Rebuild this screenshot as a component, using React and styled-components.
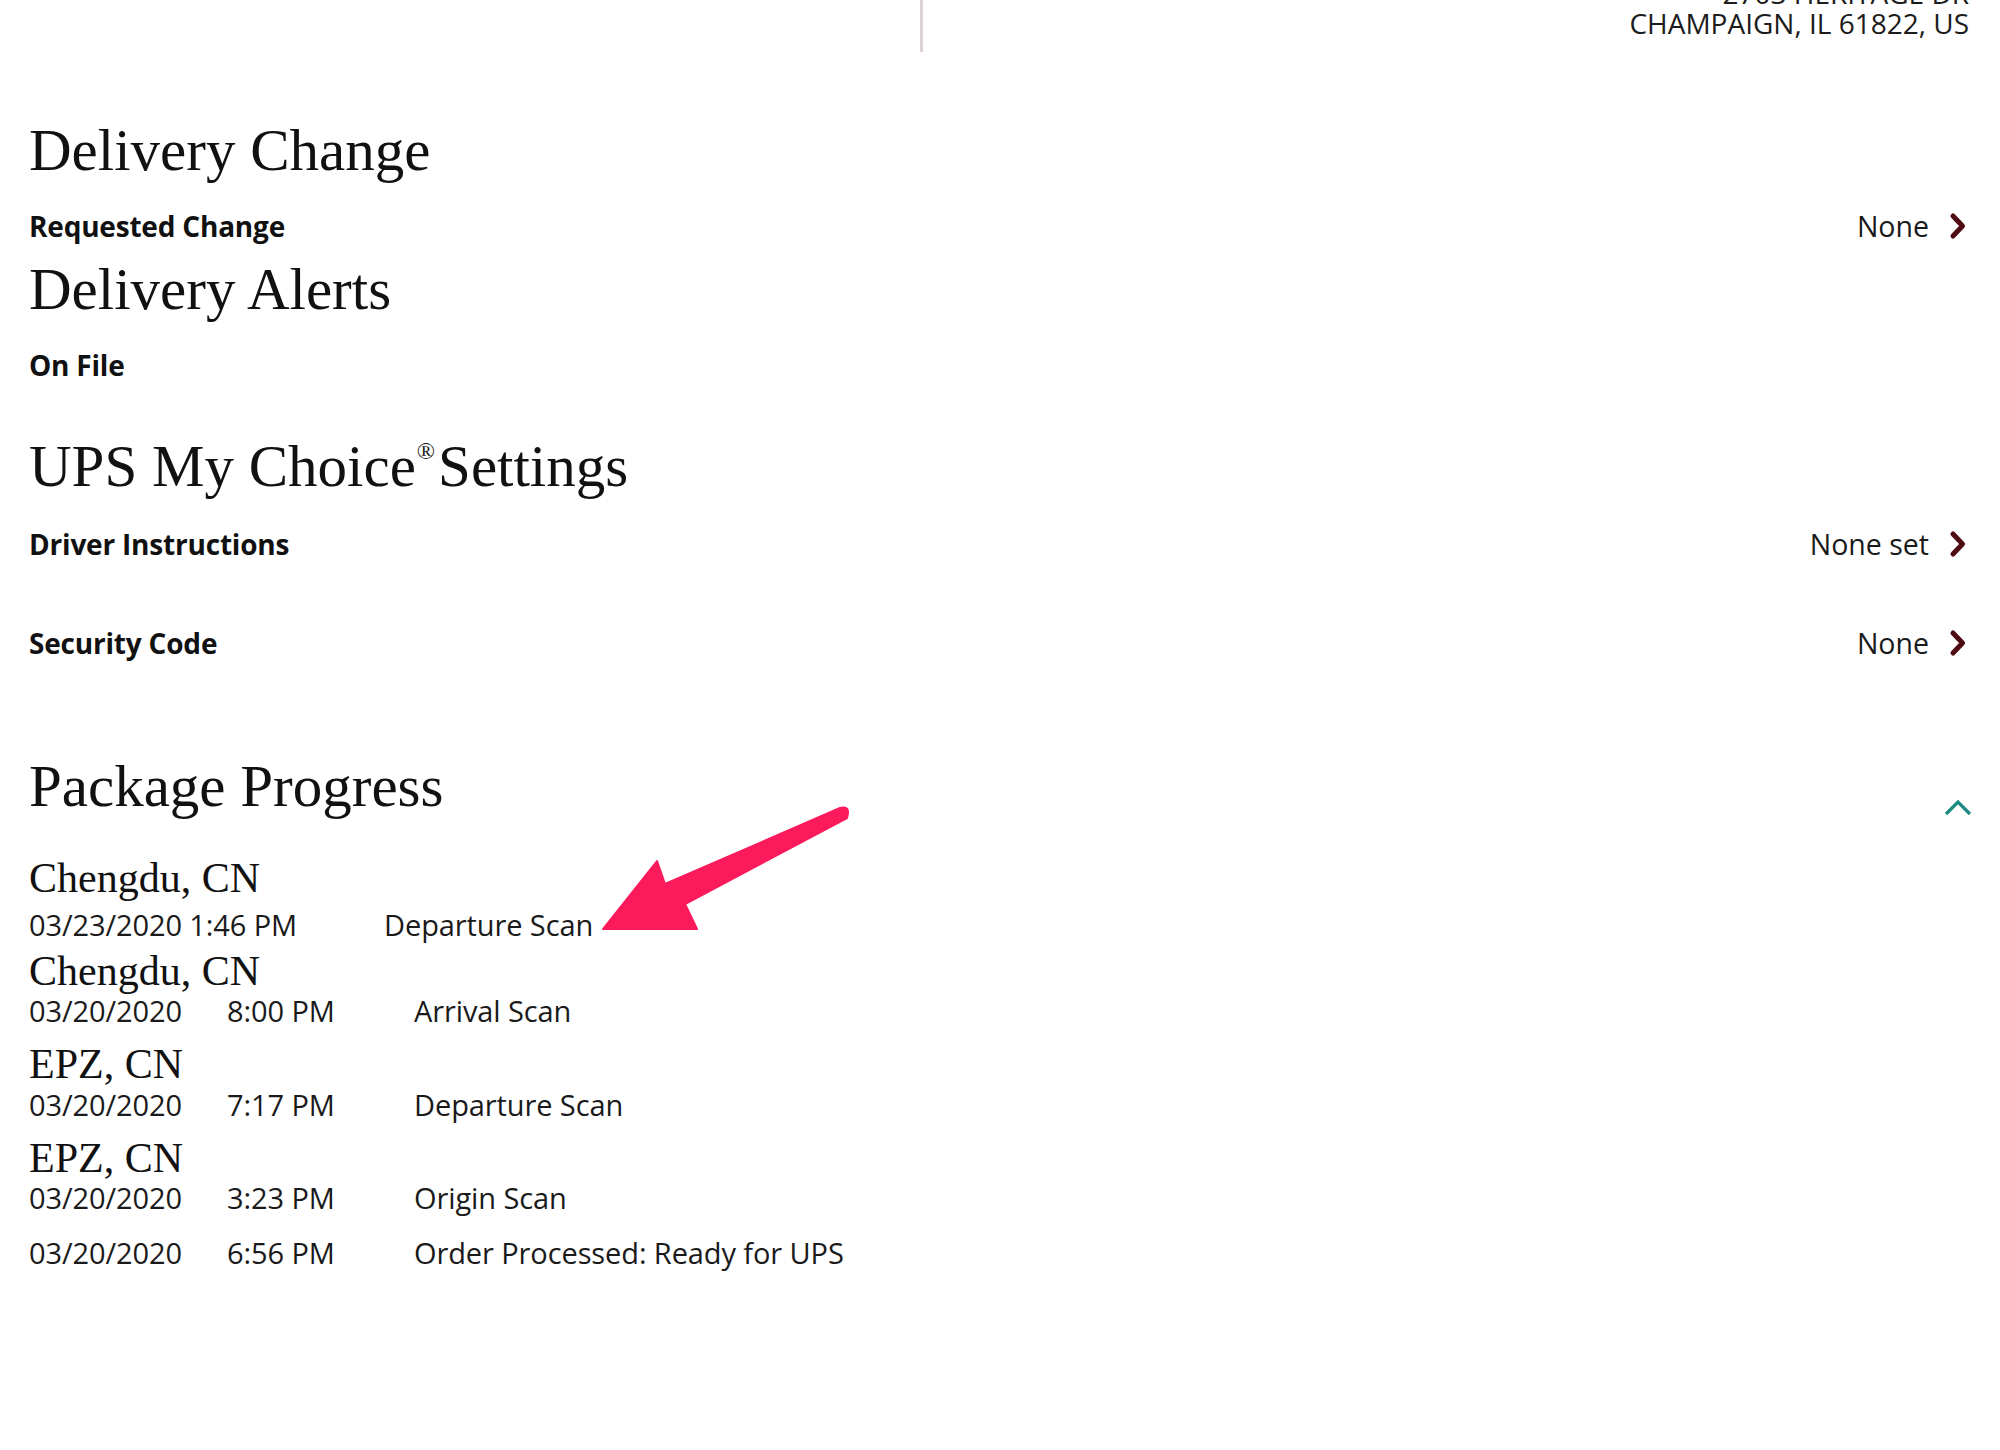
import React from 'react';
import styled, { createGlobalStyle } from 'styled-components';

const GlobalStyle = createGlobalStyle`
  * {
    box-sizing: border-box;
  }

  body {
    margin: 0;
    background: #fff;
    color: #111;
    font-family: 'Open Sans', 'Liberation Sans', sans-serif;
  }
`;

const Page = styled.main`
  position: relative;
  width: 2000px;
  min-height: 1450px;
  padding: 0 31px 0 29px;
`;

const TopBar = styled.header`
  display: grid;
  grid-template-columns: 923px 1fr;
  grid-template-rows: 52px;
  height: 52px;
  overflow: hidden;
  margin: 0 -31px 0 -29px;
`;

const TopLeft = styled.div`
  border-right: 3px solid #ddd3d4;
`;

const Address = styled.address`
  align-self: end;
  padding: 0 31px 14px 0;
  font-style: normal;
  font-size: 28px;
  line-height: 30px;
  text-align: right;
  color: #1c1c1c;
`;

const Heading = styled.h2`
  margin: ${({ $top }) => $top}px 0 0;
  font-family: 'Liberation Serif', 'Times New Roman', serif;
  font-weight: 400;
  font-size: 59px;
  line-height: 57px;
  color: #111;

  sup {
    font-size: 24px;
    vertical-align: 27px;
    line-height: 0;
    margin: 0 3px 0 1px;
  }
`;

const HeadingRow = styled.div`
  display: flex;
  justify-content: space-between;
  align-items: flex-end;
`;

const SettingRow = styled.div`
  display: flex;
  justify-content: space-between;
  align-items: center;
  margin-top: ${({ $top }) => $top}px;
  height: 34px;
`;

const Label = styled.span`
  font-size: 28px;
  line-height: 34px;
  font-weight: 700;
  letter-spacing: -0.2px;
  color: #111;
`;

const Value = styled.span`
  display: flex;
  align-items: center;
  gap: 18px;
  font-size: 28.5px;
  line-height: 34px;
  color: #1a1a1a;
`;

const Location = styled.div`
  margin-top: ${({ $top }) => $top}px;
  font-family: 'Liberation Serif', 'Times New Roman', serif;
  font-size: 42px;
  line-height: 42px;
  color: #111;
`;

const ScanRow = styled.div`
  display: grid;
  grid-template-columns: ${({ $compact }) => ($compact ? '355px' : '198px 187px')} auto;
  margin-top: ${({ $top }) => $top}px;
  font-size: 29px;
  line-height: 34px;
  letter-spacing: -0.1px;
  color: #1a1a1a;
`;

const Arrow = styled.svg`
  position: absolute;
  left: 590px;
  top: 800px;
  pointer-events: none;
`;

function ChevronRight() {
  return (
    <svg width='22' height='28' viewBox='0 0 22 28'>
      <path d='M6 4 L15.5 14 L6 24' fill='none' stroke='#4e0c12' strokeWidth='5' strokeLinecap='round' strokeLinejoin='round' />
    </svg>
  );
}

function ChevronUp() {
  return (
    <svg width='30' height='20' viewBox='0 0 30 20' style={{ marginBottom: -3, marginRight: -4 }}>
      <path d='M3 16 L15 4 L27 16' fill='none' stroke='#1d8a82' strokeWidth='3.2' />
    </svg>
  );
}

const events = [
  {
    location: 'Chengdu, CN',
    top: 42,
    scans: [{ date: '03/23/2020 1:46 PM', desc: 'Departure Scan', compact: true, top: 9 }],
  },
  {
    location: 'Chengdu, CN',
    top: 8,
    scans: [{ date: '03/20/2020', time: '8:00 PM', desc: 'Arrival Scan', top: 2 }],
  },
  {
    location: 'EPZ, CN',
    top: 15,
    scans: [{ date: '03/20/2020', time: '7:17 PM', desc: 'Departure Scan', top: 3 }],
  },
  {
    location: 'EPZ, CN',
    top: 15,
    scans: [
      { date: '03/20/2020', time: '3:23 PM', desc: 'Origin Scan', top: 2 },
      { date: '03/20/2020', time: '6:56 PM', desc: 'Order Processed: Ready for UPS', top: 21 },
    ],
  },
];

export default function App() {
  return (
    <>
      <GlobalStyle />
      <Page>
        <TopBar>
          <TopLeft />
          <Address>
            2703 HERITAGE DR
            <br />
            CHAMPAIGN, IL 61822, US
          </Address>
        </TopBar>

        <Heading $top={70}>Delivery Change</Heading>
        <SettingRow $top={30}>
          <Label>Requested Change</Label>
          <Value>
            None <ChevronRight />
          </Value>
        </SettingRow>

        <Heading $top={18}>Delivery Alerts</Heading>
        <SettingRow $top={30}>
          <Label>On File</Label>
        </SettingRow>

        <Heading $top={56}>
          UPS My Choice<sup>®</sup>Settings
        </Heading>
        <SettingRow $top={32}>
          <Label>Driver Instructions</Label>
          <Value>
            None set <ChevronRight />
          </Value>
        </SettingRow>
        <SettingRow $top={65}>
          <Label>Security Code</Label>
          <Value>
            None <ChevronRight />
          </Value>
        </SettingRow>

        <HeadingRow>
          <Heading $top={98}>Package Progress</Heading>
          <ChevronUp />
        </HeadingRow>

        {events.map((event, index) => (
          <div key={index}>
            <Location $top={event.top}>{event.location}</Location>
            {event.scans.map((scan, i) => (
              <ScanRow key={i} $compact={scan.compact} $top={scan.top}>
                <span>{scan.date}</span>
                {!scan.compact && <span>{scan.time}</span>}
                <span>{scan.desc}</span>
              </ScanRow>
            ))}
          </div>
        ))}

        <Arrow width='270' height='140' viewBox='590 800 270 140'>
          <path
            d='M603 929 L657 861 L665 884 L840 808 Q851 805 847 818 L685 904 L697 929 Z'
            fill='#fb1a5b'
            stroke='#fb1a5b'
            strokeWidth='2'
            strokeLinejoin='round'
          />
        </Arrow>
      </Page>
    </>
  );
}
